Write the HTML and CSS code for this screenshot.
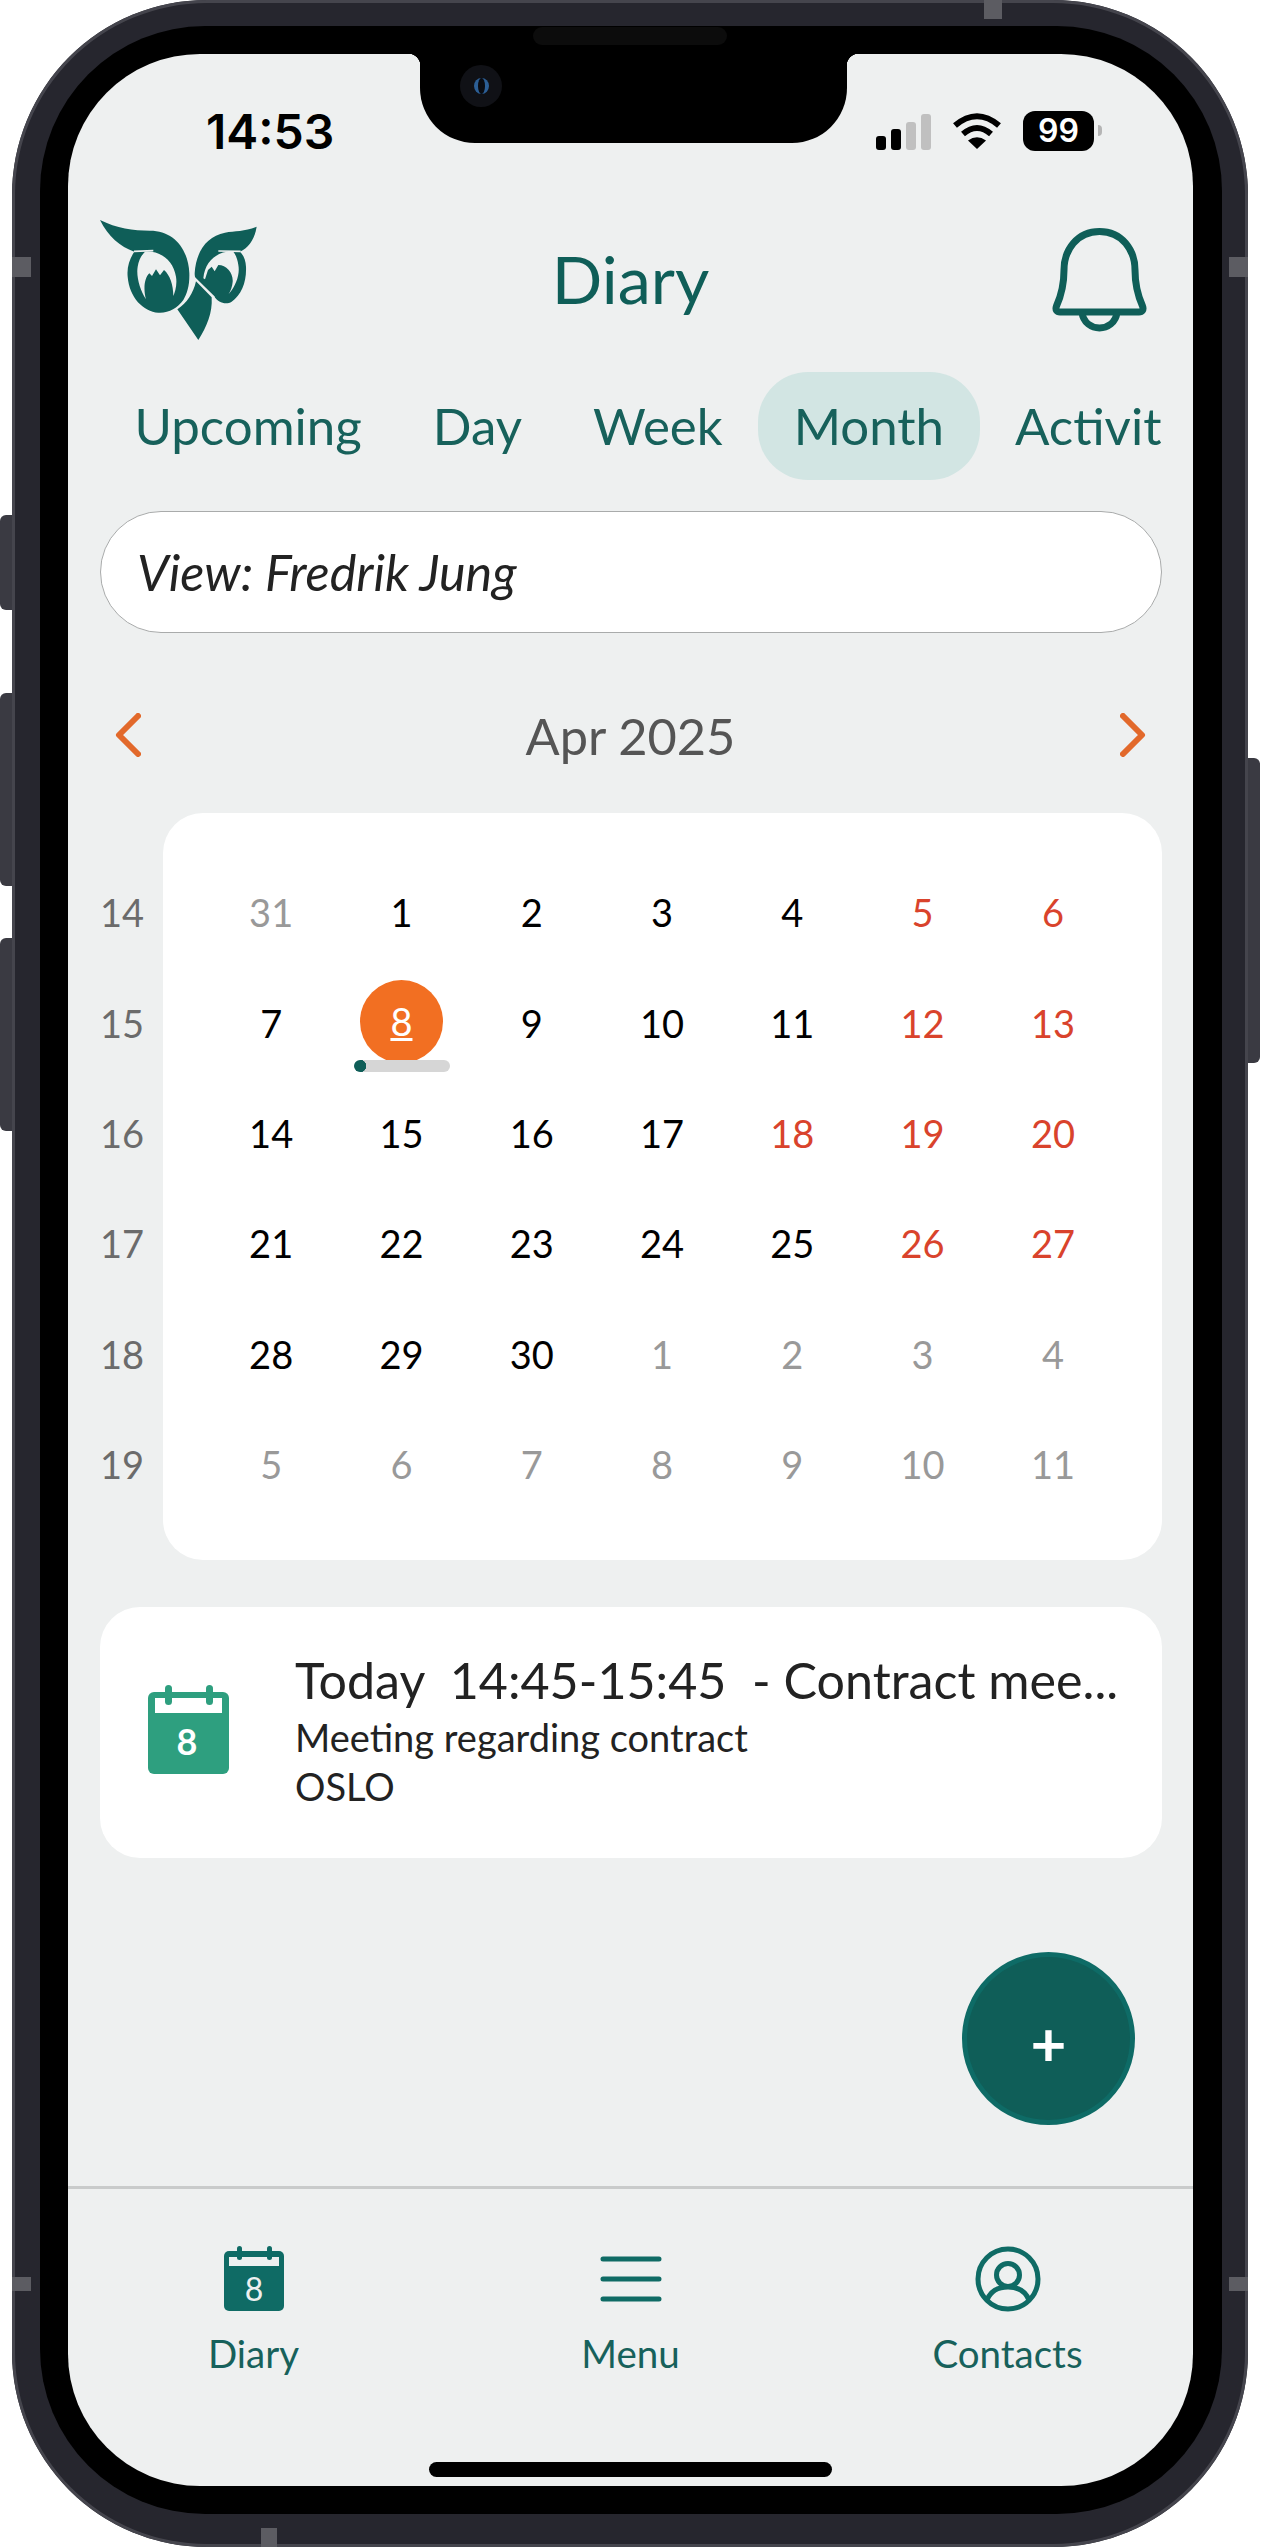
FILE: index.html
```html
<!DOCTYPE html>
<html lang="en">

<head>
  <meta charset="UTF-8">
  <meta name="viewport" content="width=device-width, initial-scale=1.0">
  <title>Diary</title>
  <link rel="stylesheet" href="styles.css">
</head>

<body>
  <div class="phone">
    <span class="side-btn left-a"></span>
    <span class="side-btn left-b"></span>
    <span class="side-btn left-c"></span>
    <span class="side-btn right-a"></span>
    <span class="band top-band"></span>
    <span class="band bottom-band"></span>
    <span class="band left-band-a"></span>
    <span class="band left-band-b"></span>
    <span class="band right-band-a"></span>
    <span class="band right-band-b"></span>
    <span class="speaker"></span>

    <div class="glass">
      <div class="screen">
        <div class="notch">
          <span class="camera"><span class="lens"></span></span>
        </div>

        <div class="status">
          <span class="time">14:53</span>
          <div class="status-icons">
            <div class="signal">
              <span class="bar-1"></span>
              <span class="bar-2"></span>
              <span class="bar-3 off"></span>
              <span class="bar-4 off"></span>
            </div>
            <svg class="wifi" viewBox="0 0 48 36" width="48" height="36">
              <path d="M2 12.5 Q24 -6 46 12.5" fill="none" stroke="#000" stroke-width="6" />
              <path d="M10 21 Q24 9 38 21" fill="none" stroke="#000" stroke-width="6" />
              <path d="M24 36 L15 27.5 Q24 21 33 27.5 Z" fill="#000" />
            </svg>
            <div class="battery">99</div>
          </div>
        </div>

        <div class="header">
          <svg class="logo" viewBox="0 0 540 420" width="180" height="140">
            <path fill="#0f5e58" d="M30 30 C80 55 130 62 180 62 C250 62 295 115 298 190 C299 225 292 250 280 270 C262 295 235 310 205 308 C160 305 118 262 113 200 C110 170 120 145 133 125 C90 110 55 80 30 30 Z" />
            <path fill="#eef0f0" d="M165 125 C210 122 250 150 258 200 C262 225 255 245 250 258 C250 225 240 195 222 180 L210 196 L198 178 L186 198 L178 190 C162 205 160 240 168 268 C150 240 138 200 143 170 C146 150 155 135 165 125 Z" />
            <path fill="none" stroke="#eef0f0" stroke-width="5" d="M132 124 L190 122" />
            <path fill="#0f5e58" d="M500 50 C465 65 435 62 405 68 C350 78 318 125 314 190 C314 198 315 203 318 205 L372 258 C385 280 410 285 425 275 C455 255 470 215 468 170 C467 150 460 135 450 125 C475 115 495 85 500 50 Z" />
            <path fill="#eef0f0" d="M430 125 C385 122 345 150 340 205 L345 208 L354 180 L365 170 L374 184 L385 165 C410 165 430 190 428 215 C427 230 422 242 416 252 C440 225 450 190 445 165 C443 150 438 135 430 125 Z" />
            <path fill="none" stroke="#eef0f0" stroke-width="5" d="M385 123 L452 124" />
            <path fill="none" stroke="#eef0f0" stroke-width="8" d="M312 205 L372 264" />
            <path fill="#0f5e58" d="M318 214 L365 262 C368 310 350 350 325 390 L262 298 C290 280 310 250 318 214 Z" />
          </svg>
          <h1 class="title">Diary</h1>
          <svg class="bell" viewBox="0 0 95 104" width="95" height="104">
            <path fill="none" stroke="#0f5e58" stroke-width="7" stroke-linejoin="round" d="M47.500 3.500 C25 3.500 12 22 12 42 C12 58 9 68 4.500 78 C3 82 5 84 8 84 H87 C90 84 92 82 90.500 78 C86 68 83 58 83 42 C83 22 70 3.500 47.500 3.500 Z" />
            <path fill="none" stroke="#0f5e58" stroke-width="7" d="M30 84 C31 95 40 100 47.500 100 C55 100 64 95 65 84" />
          </svg>
        </div>

        <div class="tabs">
          <span class="tab">Upcoming</span>
          <span class="tab">Day</span>
          <span class="tab">Week</span>
          <span class="tab active">Month</span>
          <span class="tab">Activit</span>
        </div>

        <div class="view-box">View: Fredrik Jung</div>

        <div class="month-nav">
          <svg viewBox="0 0 26 44" width="26" height="44">
            <path d="M23 3 L4 22 L23 41" fill="none" stroke="#e2692b" stroke-width="6" stroke-linecap="round" stroke-linejoin="round" />
          </svg>
          <span class="month-name">Apr 2025</span>
          <svg viewBox="0 0 26 44" width="26" height="44">
            <path d="M3 3 L22 22 L3 41" fill="none" stroke="#e2692b" stroke-width="6" stroke-linecap="round" stroke-linejoin="round" />
          </svg>
        </div>

        <div class="calendar">
          <div class="weeks">
            <span>14</span>
            <span>15</span>
            <span>16</span>
            <span>17</span>
            <span>18</span>
            <span>19</span>
          </div>
          <div class="month-card">
            <span class="muted">31</span><span>1</span><span>2</span><span>3</span><span>4</span><span class="red">5</span><span class="red">6</span>
            <span>7</span><span class="today-cell"><span class="today">8</span><span class="today-bar"></span></span><span>9</span><span>10</span><span>11</span><span class="red">12</span><span class="red">13</span>
            <span>14</span><span>15</span><span>16</span><span>17</span><span class="red">18</span><span class="red">19</span><span class="red">20</span>
            <span>21</span><span>22</span><span>23</span><span>24</span><span>25</span><span class="red">26</span><span class="red">27</span>
            <span>28</span><span>29</span><span>30</span><span class="muted">1</span><span class="muted">2</span><span class="muted">3</span><span class="muted">4</span>
            <span class="muted">5</span><span class="muted">6</span><span class="muted">7</span><span class="muted">8</span><span class="muted">9</span><span class="muted">10</span><span class="muted">11</span>
          </div>
        </div>

        <div class="event">
          <svg class="event-icon" viewBox="0 0 81 89" width="81" height="89">
            <rect y="7" width="81" height="82" rx="6" fill="#2e9f7f" />
            <rect x="7" y="13" width="67" height="15" fill="#fff" />
            <rect x="17" width="7" height="20" rx="3.500" fill="#2e9f7f" />
            <rect x="58" width="7" height="20" rx="3.500" fill="#2e9f7f" />
            <text x="39" y="70" text-anchor="middle" class="icon-day">8</text>
          </svg>
          <div class="event-text">
            <div class="event-title">Today  14:45-15:45  - Contract mee...</div>
            <div class="event-line">Meeting regarding contract</div>
            <div class="event-line">OSLO</div>
          </div>
        </div>

        <div class="fab">+</div>

        <div class="nav">
          <div class="nav-item">
            <div class="nav-icon">
              <svg viewBox="0 0 60 65" width="60" height="65">
                <rect y="5" width="60" height="60" rx="5" fill="#0f6b65" />
                <rect x="5" y="11" width="50" height="9" fill="#eef0f0" />
                <rect x="13" width="5" height="14" rx="2.500" fill="#0f6b65" />
                <rect x="43" width="5" height="14" rx="2.500" fill="#0f6b65" />
                <text x="30" y="55" text-anchor="middle" class="nav-day">8</text>
              </svg>
            </div>
            <span>Diary</span>
          </div>
          <div class="nav-item">
            <div class="nav-icon">
              <svg viewBox="0 0 62 46" width="62" height="46">
                <path d="M3 3 H59 M3 23 H59 M3 43 H59" fill="none" stroke="#0f6b65" stroke-width="5" stroke-linecap="round" />
              </svg>
            </div>
            <span>Menu</span>
          </div>
          <div class="nav-item">
            <div class="nav-icon">
              <svg viewBox="0 0 66 66" width="66" height="66">
                <circle cx="33" cy="33" r="30" fill="none" stroke="#0f6b65" stroke-width="5" />
                <circle cx="33" cy="29" r="11.500" fill="none" stroke="#0f6b65" stroke-width="5" />
                <path d="M12 54 C16 44 24 41 33 41 C42 41 50 44 54 54" fill="none" stroke="#0f6b65" stroke-width="5" />
              </svg>
            </div>
            <span>Contacts</span>
          </div>
        </div>

        <div class="home-bar"></div>
      </div>
    </div>
  </div>
</body>

</html>
```

FILE: styles.css
```css
body {
  margin: 0;
  background-color: #fff;
  font-family: "Lato", "Open Sans", sans-serif;
  overflow: hidden;
}

.phone {
  position: relative;
  box-sizing: border-box;
  width: 1236px;
  height: 2547px;
  margin-left: 12px;
  padding: 26px 26px 33px 28px;
  background-color: #26262e;
  border-radius: 195px;
  box-shadow: inset 0 0 0 3px #45454d;
}

.side-btn {
  position: absolute;
  width: 12px;
  background-color: #3a3a42;
}

.left-a,
.left-b,
.left-c {
  left: -12px;
  border-radius: 6px 0 0 6px;
}

.left-a {
  top: 515px;
  height: 95px;
}

.left-b {
  top: 693px;
  height: 193px;
}

.left-c {
  top: 938px;
  height: 193px;
}

.right-a {
  top: 758px;
  right: -12px;
  height: 305px;
  border-radius: 0 6px 6px 0;
}

.band {
  position: absolute;
  background-color: #5c5c62;
}

.top-band {
  top: 0;
  left: 972px;
  width: 18px;
  height: 19px;
}

.bottom-band {
  bottom: 0;
  left: 249px;
  width: 16px;
  height: 19px;
}

.left-band-a,
.left-band-b {
  left: 0;
  width: 19px;
}

.right-band-a,
.right-band-b {
  right: 0;
  width: 19px;
}

.left-band-a,
.right-band-a {
  top: 257px;
  height: 20px;
}

.left-band-b,
.right-band-b {
  top: 2277px;
  height: 14px;
}

.speaker {
  position: absolute;
  top: 27px;
  left: 521px;
  width: 194px;
  height: 18px;
  border-radius: 9px;
  background-color: #0c0c0c;
}

.glass {
  box-sizing: border-box;
  height: 100%;
  padding: 28px 29px 28px 28px;
  background-color: #000;
  border-radius: 165px;
}

.screen {
  position: relative;
  display: flex;
  flex-direction: column;
  height: 100%;
  background-color: #eef0f0;
  border-radius: 132px;
  overflow: hidden;
}

.notch {
  position: absolute;
  top: 0;
  left: 352px;
  width: 427px;
  height: 89px;
  background-color: #000;
  border-radius: 0 0 55px 55px;
}

.notch::before,
.notch::after {
  content: "";
  position: absolute;
  top: 0;
  width: 12px;
  height: 12px;
}

.notch::before {
  left: -12px;
  background: radial-gradient(circle at 0 100%, transparent 12px, #000 12.5px);
}

.notch::after {
  right: -12px;
  background: radial-gradient(circle at 100% 100%, transparent 12px, #000 12.5px);
}

.camera {
  position: absolute;
  top: 11px;
  left: 40px;
  display: flex;
  align-items: center;
  justify-content: center;
  width: 42px;
  height: 42px;
  border-radius: 50%;
  background-color: #101116;
}

.lens {
  box-sizing: border-box;
  width: 15px;
  height: 16px;
  border-radius: 50%;
  background-color: #0a0c12;
  border: solid #2c5f96;
  border-width: 0 4px;
}

.status {
  display: flex;
  align-items: center;
  justify-content: space-between;
  height: 40px;
  padding: 57px 99px 0 138px;
}

.time {
  font-family: "Inter", sans-serif;
  font-size: 48px;
  font-weight: 600;
  color: #000;
}

.status-icons {
  display: flex;
  align-items: center;
  gap: 22px;
}

.signal {
  display: flex;
  align-items: flex-end;
  gap: 5px;
  height: 36px;
  margin-top: 2px;
}

.signal span {
  width: 10px;
  background-color: #000;
  border-radius: 3px;
}

.signal .off {
  background-color: #c0c0c0;
}

.bar-1 {
  height: 14px;
}

.bar-2 {
  height: 21px;
}

.bar-3 {
  height: 28px;
}

.bar-4 {
  height: 36px;
}

.battery {
  position: relative;
  width: 71px;
  height: 40px;
  border-radius: 12px;
  background-color: #000;
  color: #fff;
  font-family: "Inter", sans-serif;
  font-size: 32px;
  font-weight: 600;
  line-height: 40px;
  text-align: center;
}

.battery::after {
  content: "";
  position: absolute;
  top: 14px;
  right: -8px;
  width: 4px;
  height: 11px;
  border-radius: 0 4px 4px 0;
  background-color: #b5b5b5;
}

.header {
  display: grid;
  grid-template-columns: 1fr auto 1fr;
  align-items: center;
  height: 140px;
  margin-top: 59px;
  padding: 0 46px;
}

.logo {
  margin-left: -24px;
}

.title {
  margin: 0;
  padding-bottom: 4px;
  font-size: 66.5px;
  font-weight: 400;
  color: #0f5e58;
}

.bell {
  justify-self: end;
}

.tabs {
  display: flex;
  height: 108px;
  margin: 22px 31px 0 31px;
  overflow: hidden;
  white-space: nowrap;
}

.tab {
  flex-shrink: 0;
  padding: 0 35.5px;
  font-size: 51px;
  line-height: 108px;
  color: #17615b;
  border-radius: 50px;
}

.tab.active {
  background-color: #d2e5e3;
}

.view-box {
  box-sizing: border-box;
  height: 122px;
  margin: 31px 31px 0 32px;
  padding-left: 36px;
  background-color: #fff;
  border: 1px solid #a9abab;
  border-radius: 61px;
  font-size: 50.3px;
  font-style: italic;
  line-height: 120px;
  color: #222;
}

.month-nav {
  display: flex;
  align-items: center;
  justify-content: space-between;
  height: 90px;
  margin: 57px 47px 0 47px;
}

.month-name {
  font-size: 50.5px;
  color: #555;
}

.calendar {
  display: flex;
  height: 747px;
  margin: 33px 31px 0 32px;
}

.weeks {
  display: grid;
  grid-auto-rows: 110.4px;
  flex-shrink: 0;
  width: 44px;
  padding: 44px 19px 0 0;
  font-size: 38px;
  color: #6b6b6b;
}

.weeks span,
.month-card > span {
  display: flex;
  align-items: center;
  justify-content: center;
}

.month-card {
  display: grid;
  flex: 1;
  grid-template-columns: repeat(7, 130.3px);
  grid-auto-rows: 110.4px;
  padding: 44px 44px 0 43px;
  background-color: #fff;
  border-radius: 40px;
  font-size: 38px;
  color: #000;
}

.month-card .muted {
  color: #999;
}

.month-card .red {
  color: #d9432c;
}

.today-cell {
  position: relative;
}

.today {
  display: flex;
  align-items: center;
  justify-content: center;
  width: 83px;
  height: 83px;
  margin-top: -3px;
  border-radius: 50%;
  background-color: #f26f22;
  color: #fff;
  text-decoration: underline;
}

.today-bar {
  position: absolute;
  top: 93px;
  left: 18px;
  width: 96px;
  height: 12px;
  border-radius: 6px;
  background: radial-gradient(circle at 6px 6px, #0f5e58 6px, transparent 6.5px), #d6d6d6;
}

.event {
  display: flex;
  box-sizing: border-box;
  align-items: center;
  height: 251px;
  margin: 47px 31px 0 32px;
  padding-left: 48px;
  background-color: #fff;
  border-radius: 40px;
}

.event-icon {
  flex-shrink: 0;
  margin: -6px 66px 0 0;
}

.icon-day {
  font-family: "Lato", sans-serif;
  font-size: 36px;
  font-weight: 700;
  fill: #fff;
}

.nav-day {
  font-family: "Lato", sans-serif;
  font-size: 32px;
  fill: #eef0f0;
}

.event-text {
  align-self: flex-start;
  padding-top: 43px;
  color: #222;
}

.event-title {
  margin-bottom: 3px;
  font-size: 50.2px;
  line-height: 60px;
  white-space: pre;
}

.event-line {
  font-size: 38px;
  line-height: 48.5px;
}

.fab {
  position: absolute;
  top: 1898px;
  right: 58px;
  box-sizing: border-box;
  display: flex;
  align-items: center;
  justify-content: center;
  width: 173px;
  height: 173px;
  padding-top: 6px;
  border: 5px solid #0e6b66;
  border-radius: 50%;
  background-color: #0f5e58;
  color: #fff;
  font-size: 62px;
  font-weight: 700;
}

.nav {
  display: grid;
  grid-template-columns: repeat(3, 1fr);
  gap: 6px;
  margin-top: auto;
  padding-top: 57px;
  border-top: 3px solid #c9cbcb;
}

.nav-item {
  display: flex;
  flex-direction: column;
  align-items: center;
  font-size: 38.5px;
  line-height: 44px;
  color: #17615b;
}

.nav-icon {
  display: flex;
  align-items: center;
  justify-content: center;
  height: 65px;
  margin-bottom: 20px;
}

.home-bar {
  flex-shrink: 0;
  width: 403px;
  height: 15px;
  margin: 87px auto 9px;
  border-radius: 8px;
  background-color: #000;
}
```
